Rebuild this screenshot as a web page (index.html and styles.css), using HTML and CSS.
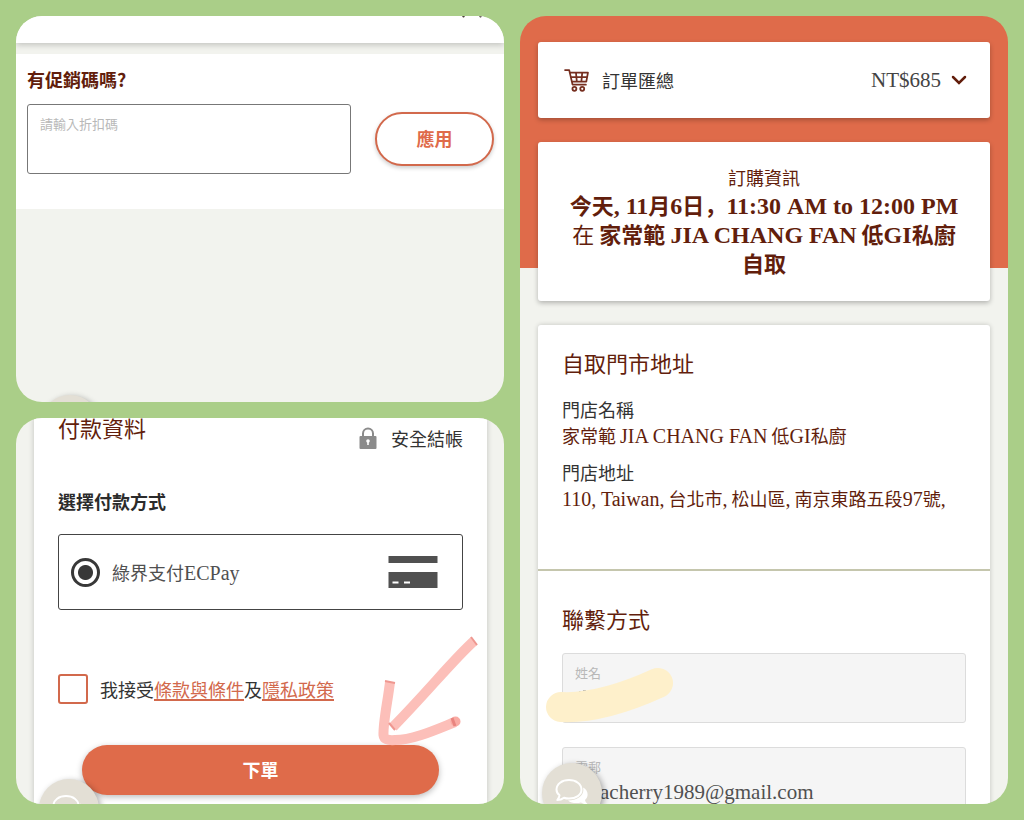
FILE: index.html
```html
<!DOCTYPE html>
<html lang="zh-Hant">
<head>
<meta charset="utf-8">
<meta name="viewport" content="width=device-width, initial-scale=1">
<title>結帳</title>
<link rel="stylesheet" href="styles.css">
</head>
<body>
<svg class="defs" aria-hidden="true">
  <symbol id="chat" viewBox="0 0 36 30">
    <path d="M29 9.500C34.500 12 35 19 31 22C31.500 24 32.500 25 34 26.500C30.500 26.500 28.500 25.500 27 24.500C22 25.800 17 25 14 22.500C24 22.500 31 17 29 9.500Z" fill="currentColor"/>
    <path d="M15 2C22 2 27.500 6 27.500 11.500S22 20.500 15 20.500C13 20.500 11.500 20.300 10 19.700C8 21.300 5.500 22 3.300 22C4.500 20.500 5.500 19 5.500 17.300C3.400 15.700 2.500 13.800 2.500 11.500C2.500 6 8 2 15 2Z" fill="#e3dfd5" stroke="currentColor" stroke-width="2" stroke-linejoin="round"/>
  </symbol>
</svg>
<main class="collage">
  <section class="panel promo-panel">
    <div class="top-bar">
      <svg class="top-marks" viewBox="0 0 20 2" aria-hidden="true"><path d="M0 0h3l-1 1.500h-1zM17 0h3l-1 1.500h-1z" fill="#4b3f3a"/></svg>
    </div>
    <form class="promo">
      <h2 class="promo-title">有促銷碼嗎?</h2>
      <div class="promo-row">
        <div class="field promo-field">
          <label for="promo">請輸入折扣碼</label>
          <input id="promo" type="text">
        </div>
        <button class="apply" type="button">應用</button>
      </div>
    </form>
    <button class="chat chat-hidden" type="button" aria-label="聊天"><svg><use href="#chat"/></svg></button>
  </section>

  <section class="panel order-panel">
    <button class="card summary" type="button">
      <svg class="cart" viewBox="0 0 24 22" aria-hidden="true" fill="none" stroke="#762f20" stroke-width="1.700" stroke-linecap="round" stroke-linejoin="round">
        <path d="M1 1h4l3.200 14H21M5.500 3.500H23l-1.600 8.500H7.500M6.500 7.800h15.500M11.500 3.500l.8 8.500M17.500 3.500l-.8 8.500"/>
        <circle cx="10" cy="19" r="1.900"/><circle cx="17.500" cy="19" r="1.900"/>
      </svg>
      <span>訂單匯總</span>
      <span class="price">NT$685</span>
      <svg class="chevron" viewBox="0 0 16 10" aria-hidden="true"><path d="M2 2l6 6 6-6" fill="none" stroke="#621e0c" stroke-width="2.500" stroke-linecap="round"/></svg>
    </button>
    <div class="card info">
      <p>訂購資訊</p>
      <h1>今天<b>, 11</b>月<b>6</b>日<span class="comma" lang="zh-Hans">，</span><b>11:30 AM to 12:00 PM</b><br><span class="at">在</span> 家常範 <b>JIA CHANG FAN</b> 低<b>GI</b>私廚<br>自取</h1>
    </div>
    <div class="card details">
      <section class="store">
        <h2 class="heading">自取門市地址</h2>
        <dl>
          <dt>門店名稱</dt>
          <dd>家常範 <span>JIA CHANG FAN</span> 低<span>GI</span>私廚</dd>
          <dt>門店地址</dt>
          <dd><span>110, Taiwan,</span> 台北市<span>,</span> 松山區<span>,</span> 南京東路五段<span>97</span>號<span>,</span></dd>
        </dl>
      </section>
      <section class="contact">
        <h2 class="heading">聯繫方式</h2>
        <div class="field filled">
          <label for="name">姓名</label>
          <input id="name" type="text">
          <svg class="marker" viewBox="0 0 130 58" aria-hidden="true" fill="none">
            <path d="M34 26h2M38 25h3" stroke="#666" stroke-width="1"/>
            <path d="M16 41Q56 43 113 17" stroke="#fef0cb" stroke-width="30" stroke-linecap="round"/>
          </svg>
        </div>
        <div class="field filled">
          <label for="email">電郵</label>
          <input id="email" class="email" type="email" value="acherry1989@gmail.com">
        </div>
      </section>
    </div>
    <button class="chat chat-order" type="button" aria-label="聊天"><svg><use href="#chat"/></svg></button>
  </section>

  <section class="panel pay-panel">
    <form class="pay-card">
      <header class="pay-head">
        <h2 class="heading">付款資料</h2>
        <div class="secure">
          <svg class="lock" viewBox="0 0 18 22" aria-hidden="true">
            <path d="M4 10V6.500a5 5 0 0 1 10 0V10" fill="none" stroke="#8b8b8b" stroke-width="2"/>
            <rect x="0.500" y="9" width="17" height="13" rx="1" fill="#8b8b8b"/>
            <circle cx="9" cy="14" r="1.800" fill="#fff"/><path d="M8.200 14h1.600v4H8.200z" fill="#fff"/>
          </svg>
          <span>安全結帳</span>
        </div>
      </header>
      <h3 class="method-title">選擇付款方式</h3>
      <label class="method">
        <input class="radio" type="radio" name="method" checked>
        <span class="method-name">綠界支付<span>ECPay</span></span>
        <svg class="credit" viewBox="0 0 49 32" aria-hidden="true"><path d="M0 0h49v7H0zM0 16h49v16H0z" fill="#505050"/><path d="M4 26.500h6M15.500 26.500h6" stroke="#fff" stroke-width="2"/></svg>
      </label>
      <div class="agree">
        <input class="check" id="agree" type="checkbox">
        <label for="agree">我接受<a href="#terms">條款與條件</a>及<a href="#privacy">隱私政策</a></label>
      </div>
      <div class="submit-row">
        <button class="submit" type="button">下單</button>
        <svg class="arrow" viewBox="0 0 114 116" aria-hidden="true" fill="none">
          <path d="M101 10C79 30 58 57 20 96" stroke="#fcbfb9" stroke-width="10"/>
          <path d="M17 51C15 69 10 91 10.500 104Q11 110 22 109C40 109 62 99 82 91" stroke="#fcbfb9" stroke-width="10" stroke-linejoin="round"/>
          <circle cx="82.500" cy="90.500" r="5" fill="#f9aaa3"/>
          <path d="M79 87l3 8" stroke="#e9847f" stroke-width="3"/>
          <path d="M98 6l6 8M16 92l6 7M12 50l10 2" stroke="#ef9790" stroke-width="2"/>
        </svg>
      </div>
    </form>
    <button class="chat chat-pay" type="button" aria-label="聊天"><svg><use href="#chat"/></svg></button>
  </section>
</main>
</body>
</html>
```
FILE: styles.css
```css
* { box-sizing: border-box; }
body {
  margin: 0;
  background: #aace88;
  color: #333;
  font: 18px/26px "Noto Sans CJK TC", sans-serif;
}
h1, h2, h3, p, dl, dd { margin: 0; }
button, input { font: inherit; color: inherit; }
button { cursor: pointer; }
.defs { display: none; }

.collage {
  height: 100vh;
  padding: 16px;
  display: grid;
  grid-template: 1fr 1fr / 1fr 1fr;
  gap: 16px;
}
.panel {
  position: relative;
  min-width: 0;
  min-height: 0;
  overflow: hidden;
  border-radius: 26px;
  background: #f2f3ee;
}
.heading {
  color: #621e0c;
  font-size: 22px;
  font-weight: 400;
  line-height: 32px;
}

.field {
  position: relative;
  display: flex;
  flex-direction: column;
  height: 70px;
  padding: 8px 12px;
  border: 1px solid #777;
  border-radius: 3px;
}
.field label {
  color: #b8b8b8;
  font-size: 13px;
  line-height: 22px;
}
.field input {
  width: 100%;
  padding: 0;
  border: 0;
  outline: 0;
  background: transparent;
  font-family: "Liberation Serif", "Noto Sans CJK TC", serif;
  font-size: 21px;
  line-height: 28px;
}

/* Promo code */
.top-bar {
  height: 27px;
  display: flex;
  justify-content: flex-end;
  align-items: flex-start;
  padding-right: 22px;
  background: #fff;
  box-shadow: 0 2px 6px #0003;
}
.top-marks { width: 20px; height: 2px; }
.promo {
  margin-top: 11px;
  padding: 12px 10px 35px 11px;
  background: #fff;
}
.promo-title {
  margin-bottom: 12px;
  color: #621e0c;
  font-size: 18px;
  font-weight: 700;
}
.promo-row { display: flex; align-items: center; gap: 24px; }
.promo-field { flex: 1; }
.apply {
  width: 119px;
  height: 54px;
  padding: 0 0 2px;
  border: 2px solid #d2694c;
  border-radius: 27px;
  background: #fff;
  color: #df6b4a;
  font-weight: 700;
  box-shadow: 0 2px 4px #0003;
}

/* Order */
.order-panel {
  grid-area: 1 / 2 / 3 / 3;
  display: flex;
  flex-direction: column;
  gap: 24px;
  padding: 26px 18px 0;
  background: linear-gradient(#df6b4a 252px, #f2f3ee 252px);
}
.card {
  border: 0;
  border-radius: 3px;
  background: #fff;
  box-shadow: 0 2px 5px #0004;
}
.summary {
  display: flex;
  align-items: center;
  padding: 25px 23px 25px 26px;
  text-align: left;
}
.cart { width: 25px; height: 23px; margin-right: 13px; }
.price {
  margin-left: auto;
  color: #444;
  font-family: "Liberation Serif", serif;
  font-size: 21px;
}
.chevron { width: 16px; height: 10px; margin-left: 10px; }
.info {
  padding: 22px 20px 24px;
  color: #621e0c;
  text-align: center;
}
.info h1 { font-size: 22px; line-height: 29px; white-space: nowrap; }
.info b { font-family: "Liberation Serif", serif; font-size: 24px; line-height: 1; }
.comma { font-family: "Noto Sans CJK SC", sans-serif; line-height: 1; }
.at { font-weight: 400; }
.details { flex: none; box-shadow: 0 0 5px #0003; }
.store {
  padding: 21px 24px 58px;
  border-bottom: 2px solid #c5c6ad;
}
.store dl { margin-top: 18px; color: #621e0c; }
.store dt { color: #333; }
.store dd { white-space: nowrap; }
.store dd + dt { margin-top: 11px; }
.store dd span { font-family: "Liberation Serif", serif; font-size: 20px; line-height: 1; }
.contact { padding: 31px 24px; }
.filled {
  margin-top: 24px;
  border-color: #dcdcdc;
  background: #f5f5f5;
}
.heading + .filled { margin-top: 19px; }
.field .email { padding-left: 25px; color: #505050; }
.marker {
  position: absolute;
  left: -18px;
  top: 12px;
  width: 130px;
  height: 58px;
}

/* Payment */
.pay-card {
  min-height: 100%;
  margin: 0 17px 0 18px;
  padding: 0 24px;
  background: #fff;
  box-shadow: 0 0 6px #0003;
}
.pay-head { display: flex; justify-content: space-between; align-items: flex-start; }
.pay-head .heading { line-height: 18px; }
.secure { display: flex; align-items: center; gap: 14px; margin-top: 7px; }
.lock { width: 18px; height: 22px; }
.method-title { margin-top: 37px; font-size: 18px; color: #2b2b2b; }
.method {
  display: flex;
  align-items: center;
  height: 76px;
  margin-top: 20px;
  padding: 0 24px 0 12px;
  border: 1px solid #444;
  border-radius: 3px;
}
.radio {
  appearance: none;
  width: 29px;
  height: 29px;
  margin: 0 12px 0 0;
  border: 3px solid #383838;
  border-radius: 50%;
  background: radial-gradient(#383838 7px, #fff 8px);
}
.method-name { flex: 1; color: #505050; }
.method-name span { font-family: "Liberation Serif", serif; font-size: 20px; line-height: 1; }
.credit { width: 50px; height: 32px; }
.agree { display: flex; align-items: center; gap: 12px; margin-top: 64px; }
.check {
  appearance: none;
  width: 30px;
  height: 30px;
  margin: 0;
  border: 2px solid #d2694c;
  border-radius: 3px;
  background: #fff;
}
.agree a { color: #d2694c; text-decoration-thickness: 2px; text-underline-offset: 2px; }
.submit-row { position: relative; margin-top: 41px; padding: 0 24px; }
.submit {
  width: 100%;
  height: 50px;
  padding: 0 0 2px;
  border: 0;
  border-radius: 25px;
  background: #df6b4a;
  color: #fff;
  font-weight: 700;
  box-shadow: 0 2px 6px #0004;
}
.arrow {
  position: absolute;
  right: -24px;
  bottom: 48px;
  width: 114px;
  height: 116px;
  pointer-events: none;
}

/* Floating chat button */
.chat {
  position: absolute;
  display: grid;
  place-items: center;
  width: 60px;
  height: 60px;
  padding: 0;
  border: 0;
  border-radius: 50%;
  background: #e3dfd5;
  color: #fff;
  box-shadow: 2px 2px 6px #0005;
}
.chat svg { width: 36px; height: 30px; }
.chat-hidden { left: 24px; bottom: -53px; }
.chat-order { left: 22px; bottom: -19px; }
.chat-pay { left: 23px; bottom: -35px; }
```
